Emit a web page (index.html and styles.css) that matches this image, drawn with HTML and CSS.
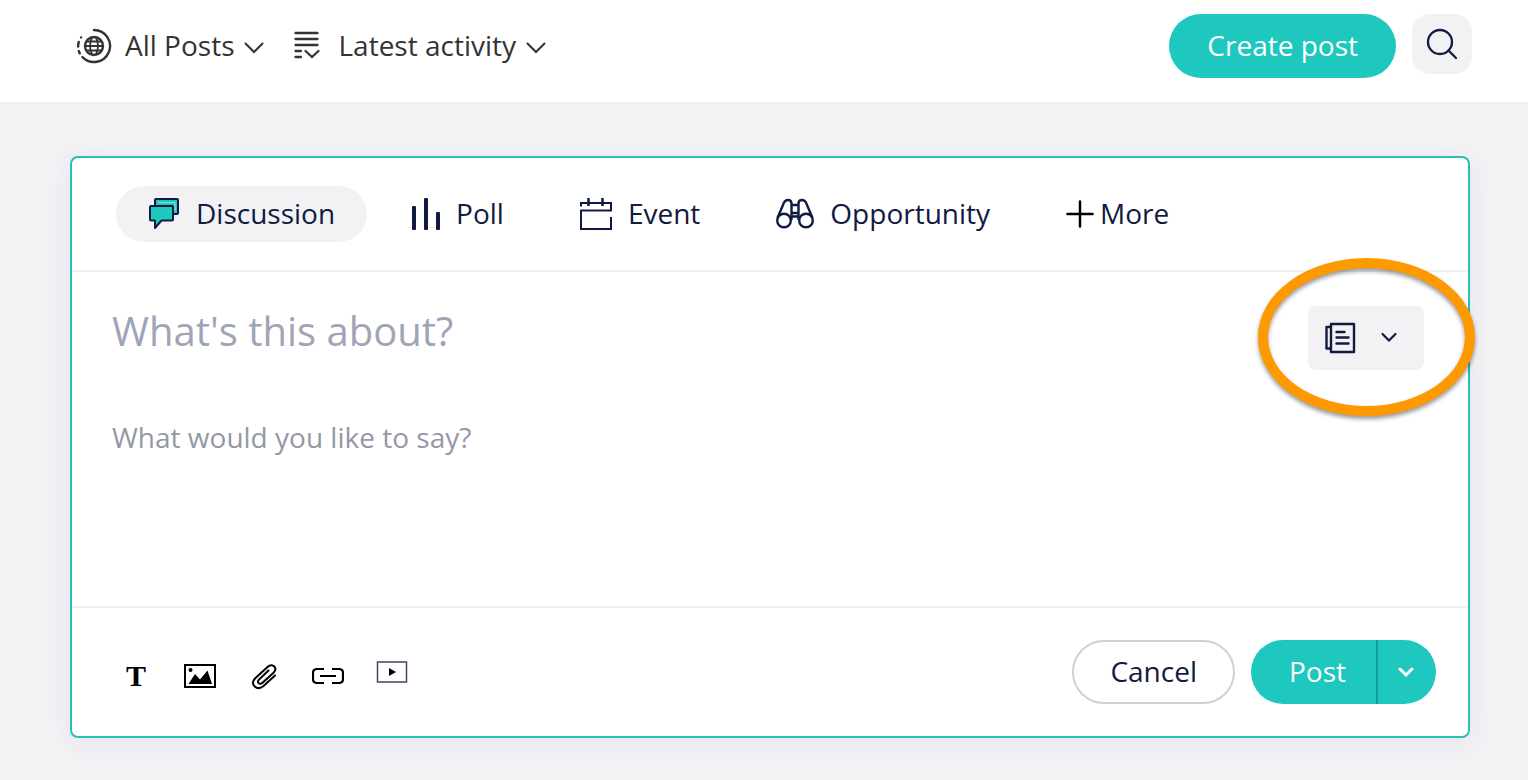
FILE: index.html
```html
<!doctype html>
<html lang="en">
<head>
    <meta charset="UTF-8">
    <meta name="viewport" content="width=device-width, initial-scale=1.0">
    <title>Create post</title>
    <link rel="stylesheet" href="styles.css">
</head>
<body>
<header class="topbar">
    <div class="filters">
        <button type="button" class="filter">
            <svg class="filter-icon" width="36" height="36" viewBox="0 0 36 36" fill="none" stroke="currentColor" stroke-width="2.400" stroke-linecap="round">
                <path d="M18 2a16 16 0 1 1-11.500 27.100"/>
                <path d="M3.800 25.500l-1-2.500M2.100 18.500q0-2.500.700-4.500M5 9.500l.100-.100"/>
                <circle cx="18" cy="18" r="9"/>
                <path d="M16 9.500q-4 8.500 0 17M20 9.500q4 8.500 0 17M9 18h18M11 13.500h14M11 22.500h14" stroke-width="1.800"/>
            </svg>
            <span>All Posts</span>
            <svg class="chevron" width="20" height="12" viewBox="0 0 20 12" fill="none" stroke="currentColor" stroke-width="2" stroke-linecap="round"><path d="M1.500 1.500l8.500 8.500 8.500-8.500"/></svg>
        </button>
        <button type="button" class="filter">
            <svg class="filter-icon" width="31" height="32" viewBox="0 0 31 32" fill="none" stroke="currentColor" stroke-width="2.300" stroke-linecap="round">
                <path d="M1.500 3h22M1.500 9h22M1.500 15h22M1.500 21H7M1.500 27H7M11.500 21l6.500 6 6.500-6"/>
            </svg>
            <span>Latest activity</span>
            <svg class="chevron" width="20" height="12" viewBox="0 0 20 12" fill="none" stroke="currentColor" stroke-width="2" stroke-linecap="round"><path d="M1.500 1.500l8.500 8.500 8.500-8.500"/></svg>
        </button>
    </div>
    <div class="topbar-actions">
        <button type="button" class="btn btn-primary">Create post</button>
        <button type="button" class="search-btn" aria-label="Search">
            <svg width="32" height="32" viewBox="0 0 32 32" fill="none" stroke="currentColor" stroke-width="2.300" stroke-linecap="round"><circle cx="14" cy="14" r="12"/><path d="M22.500 22.500l7.500 7.500"/></svg>
        </button>
    </div>
</header>

<main>
    <form class="composer">
        <nav class="tabs">
            <button type="button" class="tab active">
                <svg width="32" height="32" viewBox="0 0 32 32" fill="#1ec8be" stroke="#111a40" stroke-width="2" stroke-linejoin="round">
                    <path d="M7 8V2q0-1 1-1h21q1 0 1 1v13q0 1-1 1h-4"/>
                    <path d="M3 8h21q1 0 1 1v12.500q0 1-1 1H13.500L7 30v-7.500H3q-1 0-1-1V9q0-1 1-1z"/>
                    <path d="M10 4.500h17V13" fill="none" stroke="#8adfe0" stroke-width="1"/>
                </svg>
                <span>Discussion</span>
            </button>
            <button type="button" class="tab">
                <svg width="29" height="32" viewBox="0 0 29 32" fill="currentColor"><rect x="1" y="8" width="4" height="24" rx="1"/><rect x="13" width="4" height="32" rx="1"/><rect x="25" y="14" width="4" height="18" rx="1"/></svg>
                <span>Poll</span>
            </button>
            <button type="button" class="tab">
                <svg width="32" height="32" viewBox="0 0 32 32" fill="none" stroke="currentColor" stroke-width="2">
                    <path d="M1 8.500V5h30v7.500H1V31h30V19"/><path d="M8.500 0v8M22.500 0v8" stroke-width="2.500"/>
                </svg>
                <span>Event</span>
            </button>
            <button type="button" class="tab">
                <svg width="38" height="32" viewBox="0 0 38 32" fill="none" stroke="currentColor" stroke-width="2.400">
                    <circle cx="8" cy="22.500" r="6.800"/><circle cx="30" cy="22.500" r="6.800"/>
                    <path d="M1.500 20L8 4.500Q9.500 2 12 2q3.500 0 3.500 3.500V22M36.500 20L30 4.500Q28.500 2 26 2q-3.500 0-3.500 3.500V22"/>
                    <path d="M15.500 7h7M15.500 15h7M15.500 18.500h7"/>
                </svg>
                <span>Opportunity</span>
            </button>
            <button type="button" class="tab tab-more">
                <svg width="30" height="32" viewBox="0 0 30 32" fill="none" stroke="#000" stroke-width="2.500" stroke-linecap="round"><path d="M1.500 16h25M14 3.500v25"/></svg>
                <span>More</span>
            </button>
        </nav>

        <div class="composer-body">
            <div class="title-row">
                <input type="text" class="title-input" aria-label="Title" placeholder="What's this about?">
                <div class="format-picker">
                    <button type="button" class="format-btn" aria-label="Post format">
                        <svg width="32" height="32" viewBox="0 0 32 32" fill="none" stroke="currentColor" stroke-width="2.400" stroke-linecap="round" stroke-linejoin="round">
                            <path d="M7 2h23v28H7zM7 5H2.500v21.500H7M12.500 10h8M12.500 15.500h12M12.500 21.500h12"/>
                        </svg>
                        <svg width="18" height="12" viewBox="0 0 18 12" fill="none" stroke="currentColor" stroke-width="2.200" stroke-linecap="round"><path d="M2.500 2L9 8.500 15.500 2"/></svg>
                    </button>
                    <span class="highlight"></span>
                </div>
            </div>
            <textarea class="text-input" aria-label="Message" placeholder="What would you like to say?"></textarea>
        </div>

        <footer class="composer-footer">
            <div class="toolbar">
                <button type="button" class="tool tool-text" aria-label="Text formatting">T</button>
                <button type="button" class="tool" aria-label="Image">
                    <svg width="32" height="32" viewBox="0 0 32 32">
                        <rect x="1" y="5" width="30" height="22" fill="none" stroke="#000" stroke-width="2"/>
                        <circle cx="6.500" cy="10" r="2"/><path d="M4.500 24l6.500-10 5 5.500 7.500-9 4.500 13.500z"/>
                    </svg>
                </button>
                <button type="button" class="tool" aria-label="Attachment">
                    <svg width="32" height="32" viewBox="0 0 32 32" fill="none" stroke="#000" stroke-width="2" stroke-linecap="round">
                        <path d="M27 15.500L15.500 26c-3 2.500-6.500 2.500-8.800.5-2.300-2.300-2-5.500.3-8L19.500 7c2.500-2.300 5.200-2.300 6.800-.5 1.600 1.800 1.200 4.200-.8 6.200L14.500 22.800c-1.400 1.300-3 1.400-3.900.4s-.7-2.500.6-3.800L20.500 10.500"/>
                    </svg>
                </button>
                <button type="button" class="tool" aria-label="Link">
                    <svg width="32" height="32" viewBox="0 0 32 32" fill="none" stroke="#000" stroke-width="2.200">
                        <path d="M12 9H5Q1 9 1 13v6q0 4 4 4h7M20 9h7q4 0 4 4v6q0 4-4 4h-7M8 16h16"/>
                    </svg>
                </button>
                <button type="button" class="tool" aria-label="Video">
                    <svg width="32" height="32" viewBox="0 0 32 32"><path d="M1.500 2h29v20h-29z" fill="none" stroke="#414666" stroke-width="1.500"/><path d="M13 8l7 4-7 4z"/></svg>
                </button>
            </div>
            <div class="actions">
                <button type="button" class="btn btn-outline">Cancel</button>
                <div class="split-btn">
                    <button type="submit" class="btn btn-primary split-main">Post</button>
                    <button type="button" class="btn btn-primary split-toggle" aria-label="More post options">
                        <svg width="16" height="12" viewBox="0 0 16 12" fill="none" stroke="currentColor" stroke-width="3" stroke-linecap="round"><path d="M2 3l6 6 6-6"/></svg>
                    </button>
                </div>
            </div>
        </footer>
    </form>
</main>
</body>
</html>
```

FILE: styles.css
```css
* {
    box-sizing: border-box;
}

body {
    margin: 0;
    background-color: #f2f2f5;
    color: #111a40;
    font-family: "Open Sans", "Noto Sans", sans-serif;
    font-size: 28px;
    line-height: 40px;
}

button,
input,
textarea {
    margin: 0;
    padding: 0;
    border: 0;
    background: none;
    color: inherit;
    font: inherit;
}

button {
    cursor: pointer;
}

svg {
    display: block;
    flex-shrink: 0;
}

.topbar {
    display: flex;
    justify-content: space-between;
    align-items: flex-start;
    padding: 14px 56px 24px 76px;
    background-color: #fff;
}

.filters {
    display: flex;
    align-items: center;
    gap: 30px;
    height: 64px;
    color: #333;
}

.filter {
    display: flex;
    align-items: center;
}

.filter span,
.tab span {
    padding-bottom: 2px;
}

.filter-icon {
    margin-right: 13px;
}

.chevron {
    margin: 4px 0 0 10px;
}

.topbar-actions {
    display: flex;
    align-items: flex-start;
    gap: 16px;
}

.btn {
    height: 64px;
    padding: 0 38px 2px;
    border-radius: 32px;
}

.btn-primary {
    background-color: #1ec8be;
    color: #fff;
}

.btn-outline {
    padding: 0 36px 2px;
    border: 2px solid #cfd0d9;
    background-color: #fff;
}

.search-btn {
    display: flex;
    justify-content: center;
    align-items: center;
    width: 60px;
    height: 60px;
    border-radius: 18px;
    background-color: #f2f2f5;
}

.composer {
    margin: 54px 58px 42px 70px;
    border: 2px solid #26c0b8;
    border-radius: 8px;
    background-color: #fff;
    box-shadow: 0 4px 24px rgba(60, 50, 110, 0.07);
}

.tabs {
    display: flex;
    gap: 12px;
    padding: 28px 44px;
    border-bottom: 2px solid #f2f2f5;
}

.tab {
    display: flex;
    align-items: center;
    gap: 16px;
    height: 56px;
    padding: 0 32px;
    border-radius: 28px;
}

.tab.active {
    background-color: #f2f2f5;
}

.tab-more {
    gap: 4px;
}

.composer-body {
    padding: 34px 44px 0 40px;
}

.title-row {
    display: flex;
    align-items: flex-start;
    justify-content: space-between;
}

.title-input {
    flex: 1;
    min-width: 0;
    height: 48px;
    font-size: 40px;
}

.title-input::placeholder {
    color: #a0a4b8;
    opacity: 1;
}

.format-picker {
    position: relative;
}

.format-btn {
    display: flex;
    align-items: center;
    gap: 24px;
    width: 116px;
    height: 64px;
    padding-left: 16px;
    border-radius: 8px;
    background-color: #f2f2f5;
}

/* ring drawn over the format picker */
.highlight {
    position: absolute;
    inset: -48px -51px -46px -50px;
    border: 10px solid #ff9900;
    border-radius: 50%;
    filter: drop-shadow(0 3px 2px rgba(0, 0, 0, 0.4));
    pointer-events: none;
}

.text-input {
    display: block;
    width: 100%;
    height: 189px;
    margin-top: 47px;
    resize: none;
}

.text-input::placeholder {
    color: #9498a5;
    opacity: 1;
}

.title-input:focus,
.text-input:focus {
    outline: none;
}

.composer-footer {
    display: flex;
    justify-content: space-between;
    align-items: center;
    padding: 32px 32px 32px 48px;
    border-top: 2px solid #f2f2f5;
}

.toolbar {
    display: flex;
    gap: 32px;
    padding-top: 8px;
}

.tool {
    width: 32px;
    height: 32px;
    color: #000;
}

.tool-text {
    font: bold 30px/32px "Liberation Serif", serif;
}

.actions {
    display: flex;
    gap: 16px;
}

.split-btn {
    display: flex;
}

.split-main {
    border-radius: 32px 0 0 32px;
    padding-right: 30px;
}

.split-toggle {
    display: flex;
    align-items: center;
    width: 60px;
    padding: 0 20px;
    border-left: 2px solid #179e97;
    border-radius: 0 32px 32px 0;
}
```
